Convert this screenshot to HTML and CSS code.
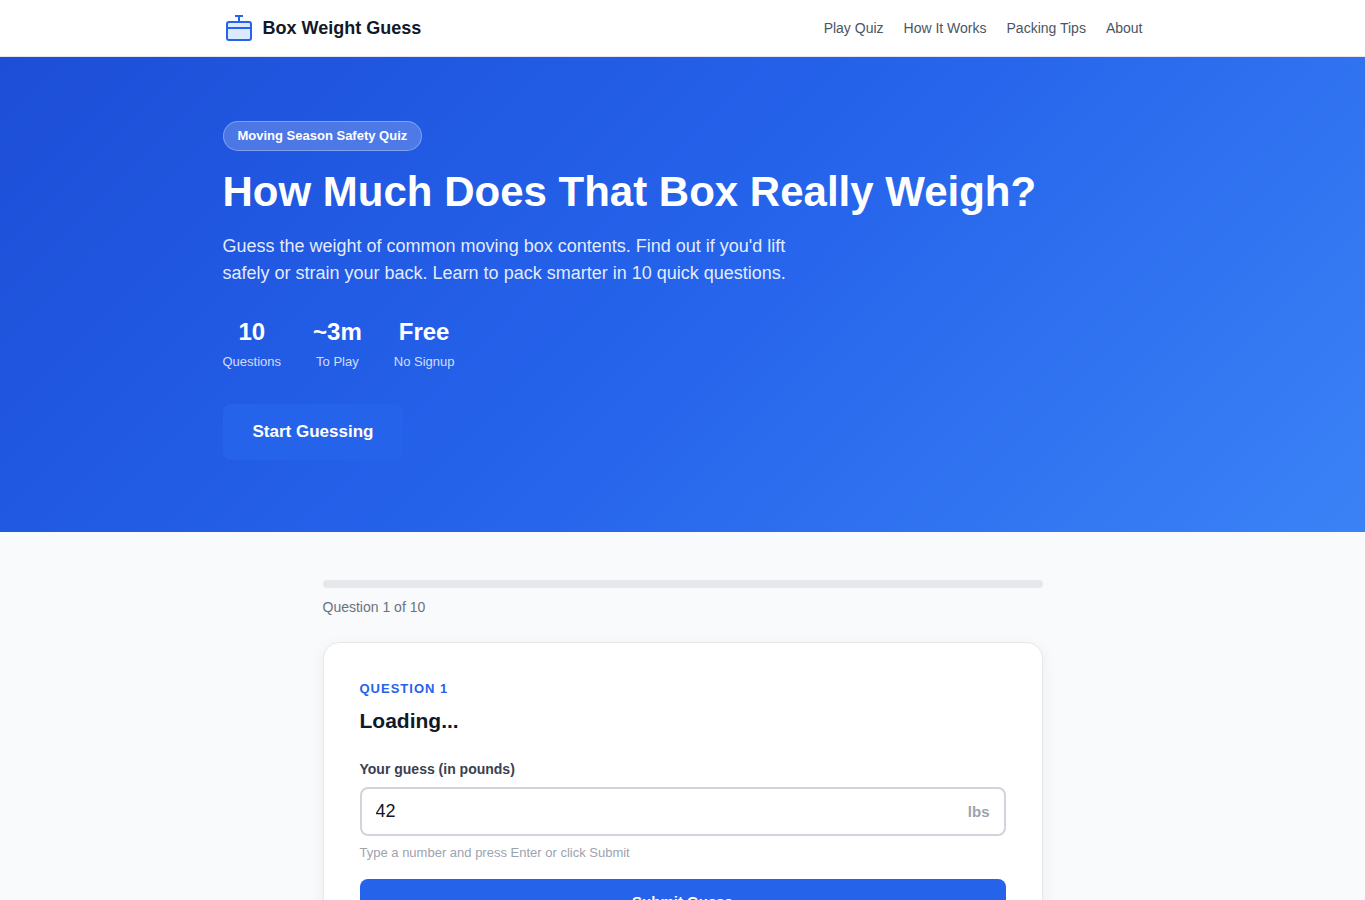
FILE: index.html
```html
<!DOCTYPE html>
<html lang="en">
<head>
<meta charset="utf-8">
<meta name="viewport" content="width=device-width, initial-scale=1">
<title>Box Weight Guess</title>
<link rel="stylesheet" href="styles.css">
</head>
<body>
<header class="site-header">
  <div class="container header-inner">
    <a class="logo" href="#">
      <svg class="logo-icon" viewBox="0 0 32 32" width="32" height="32" fill="none" stroke="#2563eb" stroke-width="2" aria-hidden="true">
        <rect x="4" y="10" width="24" height="18" rx="2" fill="#dbeafe"/>
        <path d="M4 16h24M16 10V4M12 4h8"/>
      </svg>
      <span>Box Weight Guess</span>
    </a>
    <nav class="nav">
      <a href="#quiz">Play Quiz</a>
      <a href="#how">How It Works</a>
      <a href="#tips">Packing Tips</a>
      <a href="#about">About</a>
    </nav>
  </div>
</header>
<main>
  <section class="hero">
    <div class="container">
      <span class="badge">Moving Season Safety Quiz</span>
      <h1 class="hero-title">How Much Does That Box Really Weigh?</h1>
      <p class="hero-text">Guess the weight of common moving box contents. Find out if you'd lift safely or strain your back. Learn to pack smarter in 10 quick questions.</p>
      <div class="stats">
        <div class="stat"><strong class="stat-value">10</strong><span class="stat-label">Questions</span></div>
        <div class="stat"><strong class="stat-value">~3m</strong><span class="stat-label">To Play</span></div>
        <div class="stat"><strong class="stat-value">Free</strong><span class="stat-label">No Signup</span></div>
      </div>
      <a class="start" href="#quiz">Start Guessing</a>
    </div>
  </section>
  <section class="quiz" id="quiz">
    <div class="progress" role="progressbar" aria-label="Quiz progress" aria-valuemin="0" aria-valuemax="10" aria-valuenow="0"></div>
    <p class="progress-text">Question 1 of 10</p>
    <form class="card">
      <p class="question-number">Question 1</p>
      <h2 class="question-title">Loading...</h2>
      <label class="guess-label" for="guess">Your guess (in pounds)</label>
      <div class="guess-field">
        <input class="guess-input" id="guess" type="text" inputmode="numeric" value="42" aria-describedby="hint">
        <span class="guess-unit">lbs</span>
      </div>
      <p class="hint" id="hint">Type a number and press Enter or click Submit</p>
      <button class="submit" type="button">Submit Guess</button>
    </form>
  </section>
</main>
</body>
</html>
```
FILE: styles.css
```css
* { box-sizing: border-box; }

body {
  margin: 0;
  font-family: "Liberation Sans", Arial, sans-serif;
  font-size: 16px;
  line-height: 26px;
  color: #111827;
  background: #f9fafb;
}

h1, h2, p { margin: 0; }
a { text-decoration: none; }

.container {
  max-width: 960px;
  margin: 0 auto;
  padding: 0 20px;
}

.site-header {
  background: #fff;
  border-bottom: 1px solid #e5e7eb;
}

.header-inner {
  display: flex;
  align-items: center;
  justify-content: space-between;
  min-height: 56px;
}

.logo {
  display: flex;
  align-items: center;
  gap: 8px;
  font-size: 18px;
  font-weight: 700;
  color: #111827;
}

.nav { display: flex; gap: 20px; }
.nav a { font-size: 14px; color: #4b5563; }

.hero {
  padding: 64px 0 72px;
  color: #fff;
  background: linear-gradient(135deg, #1d4ed8 0%, #2563eb 50%, #3b82f6 100%);
}

.badge {
  display: inline-block;
  padding: 4px 14px;
  font-size: 13px;
  line-height: 20px;
  font-weight: 700;
  border: 1px solid rgba(255, 255, 255, 0.3);
  border-radius: 20px;
  background: rgba(255, 255, 255, 0.2);
}

.hero-title {
  margin: 16px 0;
  font-size: 42px;
  line-height: 50px;
}

.hero-text {
  max-width: 600px;
  margin-bottom: 28px;
  font-size: 18px;
  line-height: 27px;
  color: rgba(255, 255, 255, 0.9);
}

.stats { display: flex; gap: 32px; margin-bottom: 32px; }
.stat { text-align: center; }
.stat-value { display: block; margin-bottom: 2px; font-size: 24px; line-height: 34px; }
.stat-label {
  display: block;
  font-size: 13px;
  line-height: 21px;
  color: rgba(255, 255, 255, 0.8);
}

.start {
  display: inline-block;
  padding: 14px 30px;
  font-size: 17px;
  line-height: 28px;
  font-weight: 700;
  color: #fff;
  background: #2563eb;
  border-radius: 8px;
}

.quiz {
  max-width: 760px;
  margin: 0 auto;
  padding: 48px 20px;
}

.progress {
  height: 8px;
  border-radius: 4px;
  background: #e5e7eb;
}

.progress-text {
  margin: 8px 0 24px;
  font-size: 14px;
  line-height: 22px;
  color: #6b7280;
}

.card {
  padding: 36px;
  background: #fff;
  border: 1px solid #e5e7eb;
  border-radius: 16px;
  box-shadow: 0 4px 16px rgba(0, 0, 0, 0.06);
}

.question-number {
  margin-bottom: 8px;
  font-size: 13px;
  line-height: 20px;
  font-weight: 700;
  letter-spacing: 1px;
  text-transform: uppercase;
  color: #2563eb;
}

.question-title {
  margin-bottom: 22px;
  font-size: 21px;
  line-height: 28px;
}

.guess-label {
  display: block;
  margin-bottom: 6px;
  font-size: 14px;
  line-height: 24px;
  font-weight: 700;
  color: #374151;
}

.guess-field { position: relative; }

.guess-input {
  display: block;
  width: 100%;
  padding: 12px 60px 12px 14px;
  font-family: inherit;
  font-size: 18px;
  line-height: 21px;
  color: #111827;
  background: #fff;
  border: 2px solid #d1d5db;
  border-radius: 8px;
}

.guess-unit {
  position: absolute;
  top: 0;
  right: 16px;
  bottom: 0;
  display: flex;
  align-items: center;
  font-size: 15px;
  font-weight: 700;
  color: #9ca3af;
}

.hint {
  margin: 6px 0 16px;
  font-size: 13px;
  line-height: 21px;
  color: #9ca3af;
}

.submit {
  display: block;
  width: 100%;
  padding: 14px;
  font-family: inherit;
  font-size: 15px;
  line-height: 18px;
  font-weight: 700;
  color: #fff;
  background: #2563eb;
  border: 0;
  border-radius: 8px;
}
```
